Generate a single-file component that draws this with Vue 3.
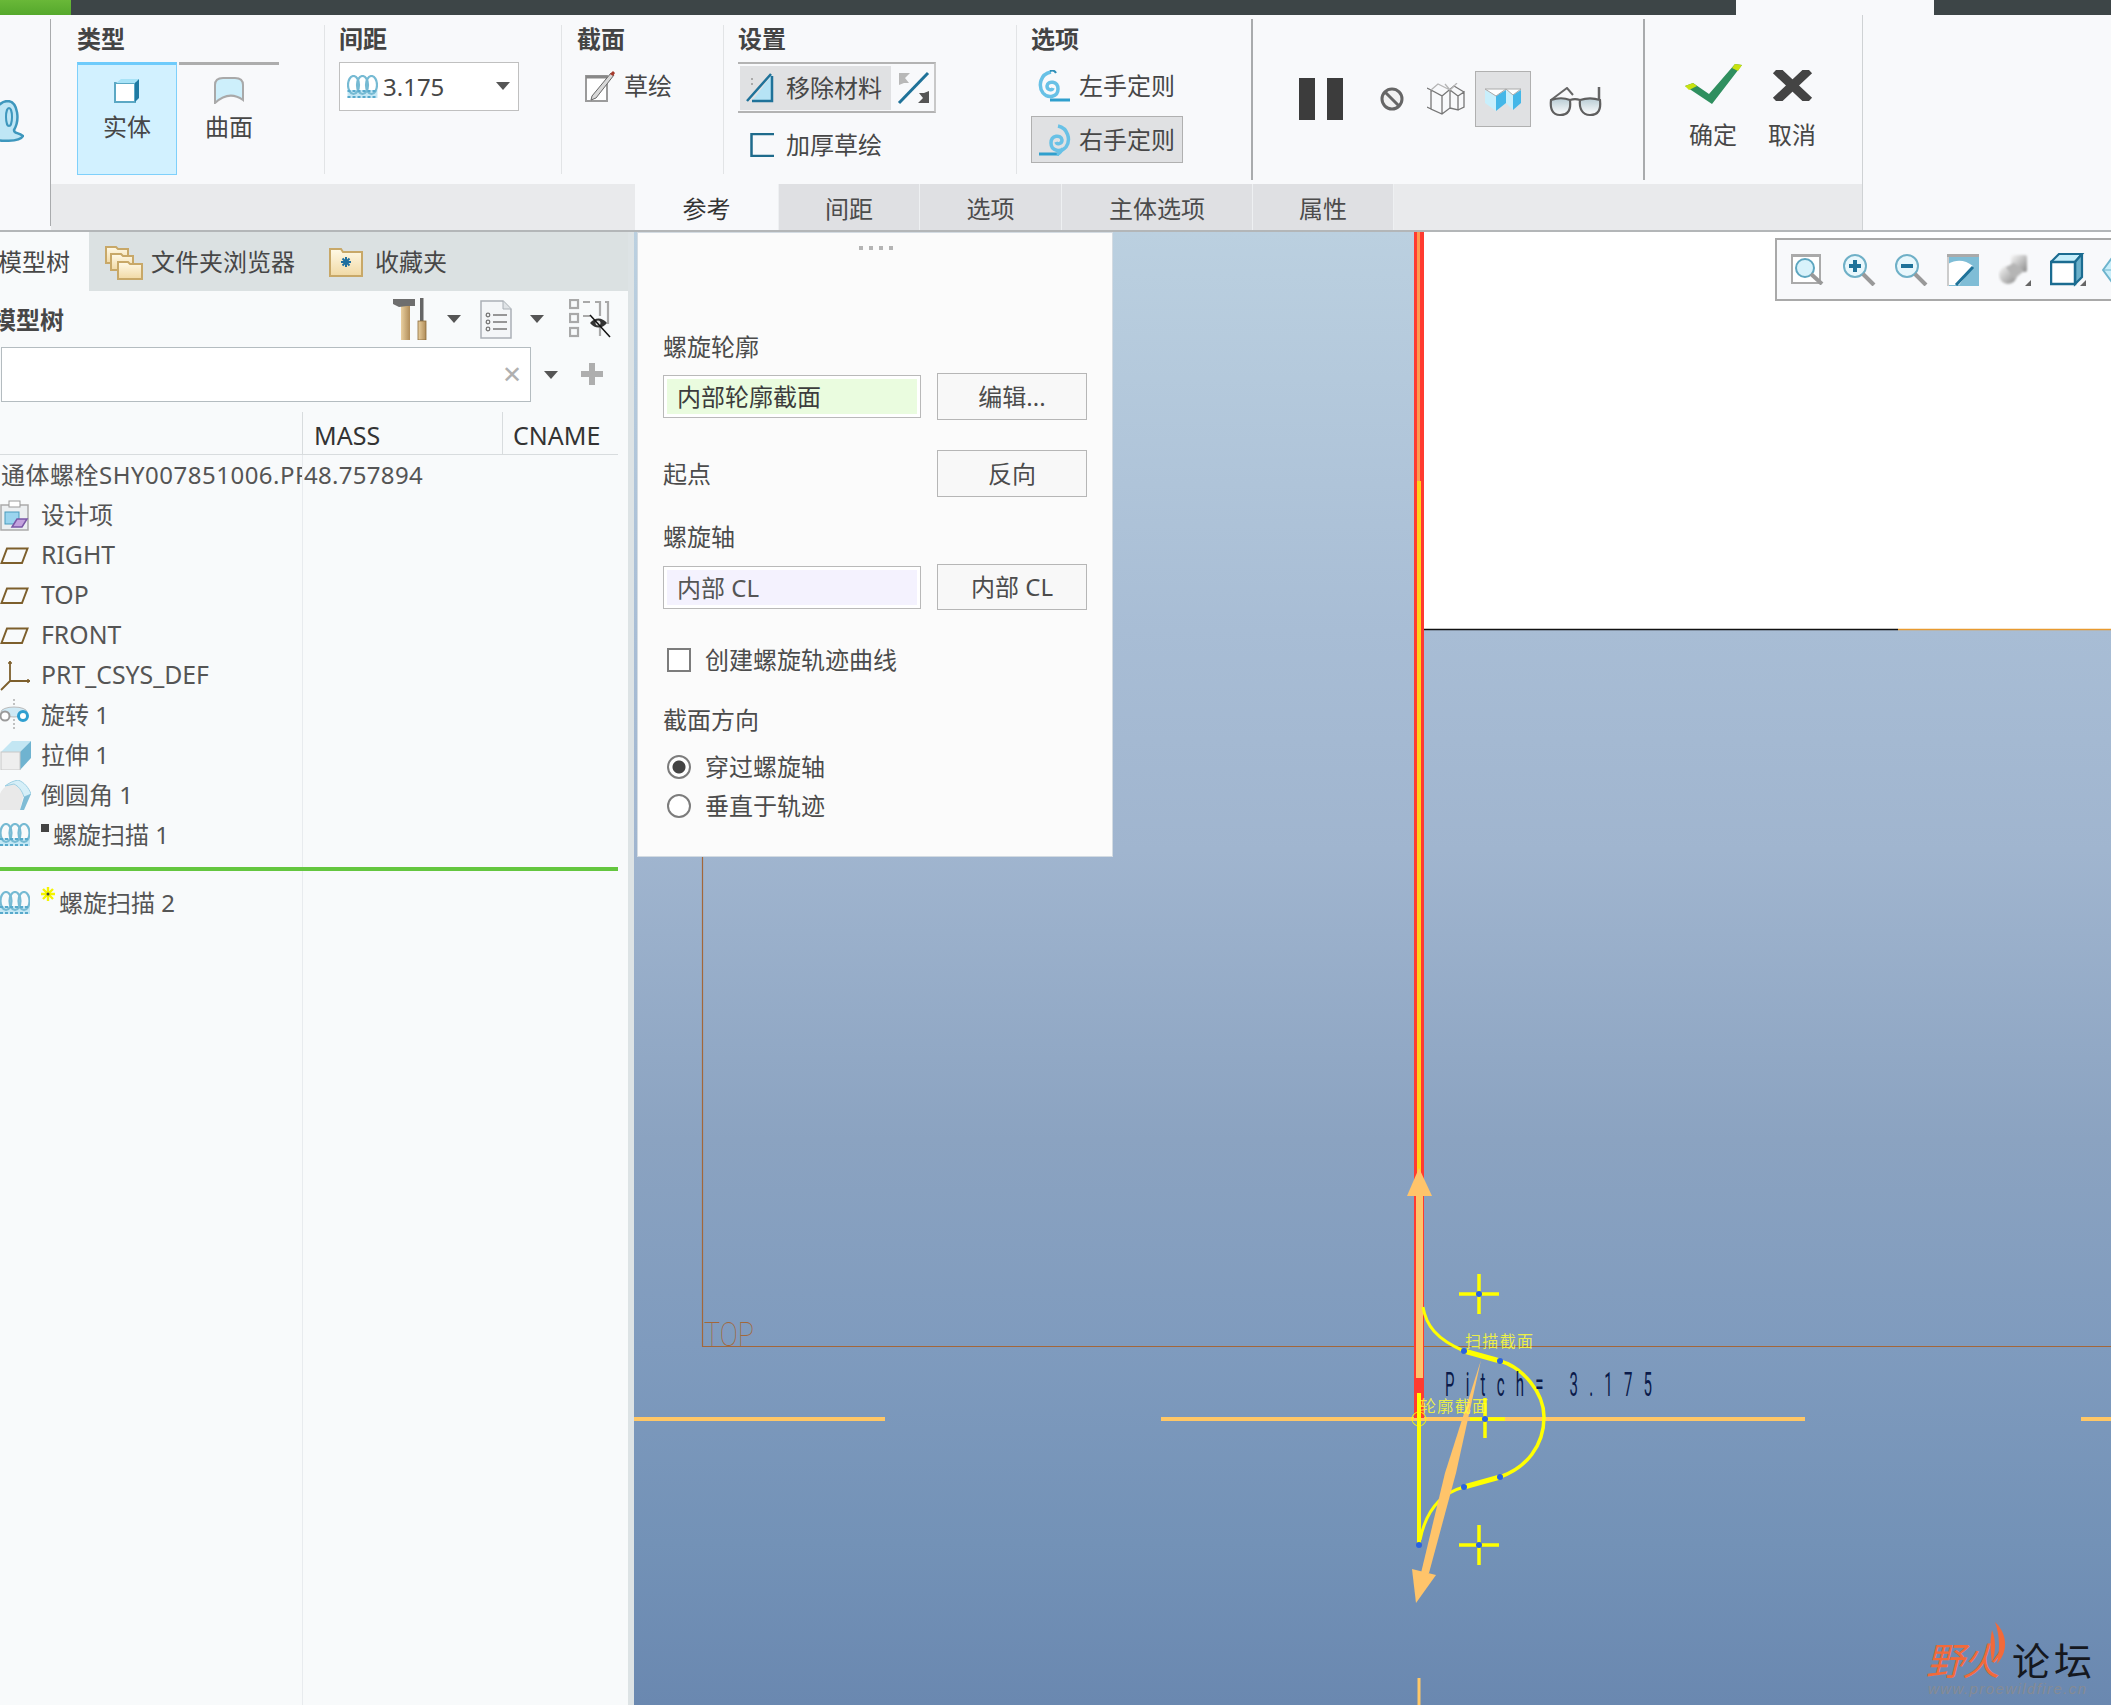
<script setup>
const rows = [
  { icon: 'item', text: '设计项' },
  { icon: 'plane', text: 'RIGHT', latin: true },
  { icon: 'plane', text: 'TOP', latin: true },
  { icon: 'plane', text: 'FRONT', latin: true },
  { icon: 'csys', text: 'PRT_CSYS_DEF', latin: true },
  { icon: 'rev', text: '旋转 1' },
  { icon: 'ext', text: '拉伸 1' },
  { icon: 'round', text: '倒圆角 1' },
]
const tabs = [
  { text: '参考', w: 144, active: true },
  { text: '间距', w: 141 },
  { text: '选项', w: 142 },
  { text: '主体选项', w: 191 },
  { text: '属性', w: 141 },
]
</script>

<template>
  <div class="app">
    <svg class="defs" width="0" height="0">
      <defs>
        <symbol id="helix" viewBox="0 0 30 24">
          <path d="M0 15h30v8H0z" fill="#c4e7f4" />
          <ellipse cx="6" cy="10" rx="5.500" ry="9" fill="none" stroke="#76bad3" stroke-width="2.200" />
          <ellipse cx="15" cy="10" rx="5.500" ry="9" fill="none" stroke="#76bad3" stroke-width="2.200" />
          <ellipse cx="24" cy="10" rx="5.500" ry="9" fill="none" stroke="#76bad3" stroke-width="2.200" />
          <path d="M0 16h30M0 22h30" stroke="#57a9cb" stroke-width="2" stroke-dasharray="3 2" />
        </symbol>
        <linearGradient id="tan" x1="0" y1="0" x2="1" y2="0">
          <stop offset="0" stop-color="#e9cf9f" />
          <stop offset="1" stop-color="#b08c58" />
        </linearGradient>
        <linearGradient id="folder" x1="0" y1="0" x2="0" y2="1">
          <stop offset="0" stop-color="#fff9e6" />
          <stop offset="1" stop-color="#f1d9a5" />
        </linearGradient>
        <linearGradient id="lens" x1="0" y1="0" x2="0" y2="1">
          <stop offset="0" stop-color="#b8ccd4" />
          <stop offset="1" stop-color="#fff" />
        </linearGradient>
        <linearGradient id="sphere" x1="0" y1="0" x2="1" y2="1">
          <stop offset="0" stop-color="#f8f8f8" />
          <stop offset="1" stop-color="#8a8a8a" />
        </linearGradient>
      </defs>
    </svg>

    <header class="topbar">
      <div class="topbar-green"></div>
      <div class="topbar-tab"></div>
    </header>

    <section class="ribbon">
      <div class="stub">
        <svg width="24" height="42" viewBox="0 0 24 42">
          <path d="M-8 38C-2 42 20 42 23 36 18 32 14 34 14 30 20 20 18 2 8 1-2 1-6 12-8 14" fill="#bfe6f5" stroke="#3e97bd" stroke-width="2.500" />
          <ellipse cx="9" cy="17" rx="3" ry="9" fill="none" stroke="#3e97bd" stroke-width="2" />
        </svg>
      </div>

      <div class="ribbon-body">
        <div class="groups">
          <div class="group g-type">
            <div class="g-title">类型</div>
            <div class="type-row">
              <div class="type-btn type-on">
                <svg width="26" height="25" viewBox="0 0 26 25">
                  <rect x="1" y="5" width="20" height="19" fill="#fff" stroke="#5ba8c4" stroke-width="2" />
                  <path d="M2 5 7 1H25L21 5Z" fill="#a8e3f7" />
                  <path d="M21 5 25 1V20L21 24Z" fill="#1f7aa3" />
                </svg>
                <span>实体</span>
              </div>
              <div class="type-btn">
                <svg width="32" height="27" viewBox="0 0 32 27">
                  <path d="M2 26V8Q2 1 10 1H22Q30 1 30 8V23Q16 13 2 26Z" fill="#cdeffb" stroke="#a9a9a9" stroke-width="2" />
                </svg>
                <span>曲面</span>
              </div>
            </div>
          </div>

          <div class="group g-pitch">
            <div class="g-title">间距</div>
            <div class="dropdown">
              <svg width="31" height="24"><use href="#helix" /></svg>
              <span class="dd-val">3.175</span>
              <i class="caret dd-caret"></i>
            </div>
          </div>

          <div class="group g-sec">
            <div class="g-title">截面</div>
            <div class="line-item">
              <svg width="31" height="32" viewBox="0 0 31 32">
                <rect x="1" y="6" width="21" height="25" fill="#fff" stroke="#9b9b9b" stroke-width="2" />
                <path d="M1 7h21" stroke="#888" stroke-width="3" />
                <path d="M7 26 26 3l3 2L11 28l-5 2z" fill="#d8d8d8" stroke="#666" />
                <path d="M25 4l3-3 2 2-2 3z" fill="#a63a2c" />
              </svg>
              <span>草绘</span>
            </div>
          </div>

          <div class="group g-set">
            <div class="g-title">设置</div>
            <div class="seg">
              <div class="seg-main">
                <svg width="30" height="30" viewBox="0 0 30 30">
                  <path d="M6 28 26 2V28Z" fill="#b6e3f5" />
                  <path d="M5 6h4M5 11h2" stroke="#aaa" stroke-width="2" stroke-dasharray="2 2" />
                  <path d="M1 28 25 1M26 3V28H6" fill="none" stroke="#1f7299" stroke-width="2.500" />
                </svg>
                <span>移除材料</span>
              </div>
              <div class="seg-flip">
                <svg width="34" height="34" viewBox="0 0 34 34">
                  <path d="M2 32 31 2" stroke="#1f7299" stroke-width="3" />
                  <path d="M2 2h11L8 7l4 5H7L2 14Z" fill="#b8b8b8" />
                  <path d="M32 32H21l5-5-4-5h5l5-2Z" fill="#555" />
                </svg>
              </div>
            </div>
            <div class="thicken">
              <svg width="24" height="24" viewBox="0 0 24 24">
                <path d="M24 1H1.500V23H24" fill="none" stroke="#1f6b8c" stroke-width="2.500" />
              </svg>
              <span>加厚草绘</span>
            </div>
          </div>

          <div class="group g-opt">
            <div class="g-title">选项</div>
            <div class="opt-item">
              <svg width="33" height="32" viewBox="0 0 33 32">
                <path d="M13 2C2 4 0 16 5 23c5 6 15 4 15-4 0-8-10-9-11-3 0 4 5 5 6 2" fill="none" stroke="#68c1e6" stroke-width="3.500" />
                <path d="M12 1c3-1 5 0 6 2" stroke="#2f8fb8" stroke-width="2" fill="none" />
                <path d="M12 30h20" stroke="#2f9fcd" stroke-width="3" />
              </svg>
              <span>左手定则</span>
            </div>
            <div class="opt-item opt-on">
              <svg width="33" height="32" viewBox="0 0 33 32">
                <path d="M20 2c10 2 13 14 8 21-5 6-15 4-15-4 0-8 10-9 11-3 0 4-5 5-6 2" fill="none" stroke="#68c1e6" stroke-width="3.500" />
                <path d="M21 30H1" stroke="#2f9fcd" stroke-width="3" />
                <path d="M25 24c-2 5-4 6-6 7" stroke="#68c1e6" stroke-width="3" fill="none" />
              </svg>
              <span>右手定则</span>
            </div>
          </div>

          <div class="group g-act">
            <svg class="ic-pause" width="44" height="42" viewBox="0 0 44 42">
              <rect width="16" height="42" fill="#3c3c3c" />
              <rect x="28" width="16" height="42" fill="#3c3c3c" />
            </svg>
            <svg class="ic-no" width="24" height="24" viewBox="0 0 24 24">
              <circle cx="12" cy="12" r="10" fill="#f1f1f1" stroke="#666" stroke-width="3" />
              <path d="M5 5 19 19" stroke="#666" stroke-width="3" />
            </svg>
            <svg class="ic-wire" width="38" height="32" viewBox="0 0 38 32" fill="none" stroke="#777" stroke-width="1.300">
              <path d="M4 7 15 13V31M15 13 27 3 37 9M4 7V26L15 31 23 25V7M23 7 31 13V27L23 25M31 13 37 9V24L31 27M0 5 4 7M0 24 4 26" />
              <path d="M4 7 11 1 23 7M18 1 23 7 30 0" stroke="#b5b5b5" />
            </svg>
            <div class="ic-btn">
              <svg width="38" height="26" viewBox="0 0 38 26">
                <path d="M1 4 12 10V25L1 17Z" fill="#c8effc" />
                <path d="M22 4 12 10V25L22 17Z" fill="#44b7e8" />
                <path d="M1 3H22L12 10Z" fill="#fff" stroke="#aaa" />
                <path d="M22 4 29 9V24L22 17Z" fill="#c8effc" />
                <path d="M37 4 29 9V24L37 17Z" fill="#44b7e8" />
                <path d="M22 3H37L29 9Z" fill="#fff" stroke="#aaa" />
              </svg>
            </div>
            <svg class="ic-glass" width="53" height="30" viewBox="0 0 53 30">
              <path d="M2 13 18 1l6 7" fill="none" stroke="#666" stroke-width="2" />
              <path d="M50 0V14" stroke="#666" stroke-width="2.500" />
              <path d="M2 13C8 11 16 11 21 13 22 22 20 28 11 28 3 28 1 21 2 13ZM31 13C37 11 45 11 51 13 52 22 50 28 41 28 33 28 30 21 31 13ZM21 13C24 12 28 12 31 13" fill="url(#lens)" stroke="#5f5f5f" stroke-width="2.200" />
            </svg>
          </div>

          <div class="group g-ok">
            <div class="ok-col">
              <div class="ok-ic">
                <svg width="57" height="40" viewBox="0 0 57 40">
                  <path d="M0 22 8 19 24 30 50 0 57 1 27 40Z" fill="#2f8f5f" />
                  <path d="M50 0 57 1 53 7 47 4Z" fill="#c9e20f" />
                  <path d="M0 22 8 19 12 22 4 26Z" fill="#c9e20f" />
                </svg>
              </div>
              <span>确定</span>
            </div>
            <div class="ok-col">
              <div class="ok-ic">
                <svg width="41" height="31" viewBox="0 0 41 31">
                  <path d="M4 0 37 31M37 0 4 31" stroke="#444" stroke-width="9" />
                </svg>
              </div>
              <span>取消</span>
            </div>
          </div>
        </div>

        <nav class="tabstrip">
          <div class="tab-gap"></div>
          <div
            v-for="t in tabs"
            :key="t.text"
            class="rtab"
            :class="{ 'rtab-on': t.active }"
            :style="{ width: t.w + 'px' }"
          >{{ t.text }}</div>
        </nav>
      </div>
    </section>

    <main class="work">
      <aside class="side">
        <div class="side-tabs">
          <div class="stab stab-on"><span>模型树</span></div>
          <div class="stab stab-folder">
            <svg width="38" height="36" viewBox="0 0 38 36">
              <path d="M1 7V3h10l2 2h10v14H1Z" fill="url(#folder)" stroke="#c8a868" stroke-width="2" />
              <path d="M6 14v-4h10l2 2h10v14H6Z" fill="url(#folder)" stroke="#c8a868" stroke-width="2" />
              <path d="M13 22v-4h10l2 2h12v15H13Z" fill="url(#folder)" stroke="#c8a868" stroke-width="2" />
            </svg>
            <span>文件夹浏览器</span>
          </div>
          <div class="stab stab-fav">
            <svg width="34" height="30" viewBox="0 0 34 30">
              <path d="M1 5V2h11l2 3h19v24H1Z" fill="url(#folder)" stroke="#c8a868" stroke-width="2" />
              <path d="M17 10v10M12 15h10M13.500 11.500l7 7M20.500 11.500l-7 7" stroke="#1f6f9f" stroke-width="2" />
            </svg>
            <span>收藏夹</span>
          </div>
        </div>

        <div class="tree-bar">
          <b>模型树</b>
          <svg class="ic-tools" width="35" height="42" viewBox="0 0 35 42">
            <rect x="8" y="6" width="9" height="36" fill="url(#tan)" />
            <path d="M0 1H22V8H14L6 9 0 6Z" fill="#6e6e6e" />
            <rect x="27" y="0" width="3.500" height="23" fill="#666" />
            <rect x="25" y="23" width="8" height="19" fill="url(#tan)" stroke="#8a6a3a" stroke-width=".8" />
          </svg>
          <i class="caret c-a"></i>
          <svg class="ic-doc" width="32" height="39" viewBox="0 0 32 39">
            <path d="M1 1H23L31 9V38H1Z" fill="#f4f6f8" stroke="#aab0b6" stroke-width="1.500" />
            <path d="M23 1V9H31" fill="#dfe3e6" stroke="#aab0b6" />
            <g fill="none" stroke="#777" stroke-width="1.300">
              <circle cx="8" cy="15" r="1.800" /><circle cx="8" cy="22" r="1.800" /><circle cx="8" cy="29" r="1.800" />
              <path d="M13 15H27M13 22H27M13 29H27" />
            </g>
          </svg>
          <i class="caret c-b"></i>
          <svg class="ic-tree" width="42" height="40" viewBox="0 0 42 40">
            <g fill="none" stroke="#a9a9a9" stroke-width="2.200">
              <rect x="1" y="1" width="8" height="8" /><rect x="1" y="15" width="8" height="8" /><rect x="1" y="29" width="8" height="8" />
              <path d="M14 3h7M14 17h7M26 3h5v14M36 3h3v22M31 22v15" />
            </g>
            <path d="M21 24c5-6 12-6 17 0-5 6-12 6-17 0Z" fill="#333" />
            <circle cx="29" cy="24" r="2.500" fill="#ddd" />
            <path d="M21 16 41 38" stroke="#111" stroke-width="1.500" />
          </svg>
        </div>

        <div class="search-row">
          <div class="search"><span class="s-x">✕</span></div>
          <i class="caret c-c"></i>
          <span class="s-plus"></span>
        </div>

        <div class="tree-head">
          <div class="th th-a"></div>
          <div class="th th-b">MASS</div>
          <div class="th th-c">CNAME</div>
        </div>

        <div class="tree-body">
          <div class="tr tr-root">
            <span class="root-name">通体螺栓SHY007851006.PRT</span>
            <span class="root-mass">48.757894</span>
          </div>
          <div v-for="r in rows" :key="r.text" class="tr">
            <span class="tr-ic">
              <svg v-if="r.icon === 'item'" width="29" height="31" viewBox="0 0 29 31">
                <rect x="1" y="5" width="27" height="25" fill="#eceff1" stroke="#aaa" stroke-width="1.500" />
                <rect x="9" y="1" width="11" height="6" fill="#fff" stroke="#999" />
                <rect x="5" y="12" width="14" height="12" fill="#9ad4ee" stroke="#4a9bbd" />
                <path d="M12 27 17 19H27L22 27Z" fill="#c3a2dd" stroke="#7a57a6" stroke-width="1.500" />
              </svg>
              <svg v-else-if="r.icon === 'plane'" width="29" height="17" viewBox="0 0 29 17">
                <path d="M1.500 16 7 1.500H27.500L22 16Z" fill="none" stroke="#7d5f2c" stroke-width="2" />
              </svg>
              <svg v-else-if="r.icon === 'csys'" width="31" height="31" viewBox="0 0 31 31">
                <path d="M10 1V21H30M10 21 1 30" fill="none" stroke="#7d5f2c" stroke-width="1.800" />
                <path d="M8 3h4M28 19v4" stroke="#7d5f2c" stroke-width="1.500" />
              </svg>
              <svg v-else-if="r.icon === 'rev'" width="29" height="32" viewBox="0 0 29 32">
                <path d="M14 0V32" stroke="#888" stroke-dasharray="2 2" />
                <ellipse cx="14" cy="13" rx="13" ry="5" fill="#cfe9f5" stroke="#bbb" />
                <circle cx="5" cy="17" r="4.500" fill="#fff" stroke="#9a9a9a" stroke-width="2" />
                <circle cx="23" cy="17" r="4.500" fill="#fff" stroke="#2f9fd0" stroke-width="3" />
              </svg>
              <svg v-else-if="r.icon === 'ext'" width="31" height="30" viewBox="0 0 31 30">
                <path d="M1 12 12 1H31L20 12Z" fill="#c3e6f3" />
                <path d="M20 12 31 1V18L20 30Z" fill="#6fb3d0" />
                <rect x="1" y="12" width="19" height="18" fill="#eeeeee" stroke="#c8c8c8" />
              </svg>
              <svg v-else-if="r.icon === 'round'" width="31" height="30" viewBox="0 0 31 30">
                <path d="M0 30V14C2 8 8 4 14 3L24 13 20 30Z" fill="#e9e9e9" />
                <path d="M5 6C9 3 13 1 18 0 24 2 29 8 31 14L24 17C22 10 18 6 14 4Z" fill="#d6eff8" stroke="#9ccfe3" />
                <path d="M24 17 31 14 24 30H20Z" fill="#7fbcd6" />
              </svg>
            </span>
            <span class="tr-text" :class="{ 'tr-latin': r.latin }">{{ r.text }}</span>
          </div>
          <div class="tr">
            <span class="tr-ic"><svg width="30" height="24"><use href="#helix" /></svg></span>
            <i class="mark"></i>
            <span class="tr-text t-after-mark">螺旋扫描 1</span>
          </div>
          <div class="insert"></div>
          <div class="tr tr-last">
            <span class="tr-ic"><svg width="30" height="24"><use href="#helix" /></svg></span>
            <svg class="mark-new" width="14" height="14" viewBox="0 0 14 14">
              <path d="M7 0V14M0 7H14M2 2 12 12M12 2 2 12" stroke="#f4f400" stroke-width="2.400" />
              <circle cx="7" cy="7" r="1.500" fill="#444" />
            </svg>
            <span class="tr-text">螺旋扫描 2</span>
          </div>
        </div>
      </aside>

      <div class="viewport">
        <svg class="canvas" width="1477" height="1473" viewBox="634 232 1477 1473">
          <rect x="1424" y="232" width="687" height="397" fill="#fff" />
          <path d="M1424 629.500H1898" stroke="#111" stroke-width="1.500" />
          <path d="M1898 629.500H2111" stroke="#e89a30" stroke-width="1.500" />

          <path d="M702.500 856V1346.500H2111" fill="none" stroke="#a3673a" stroke-width="1.200" />
          <text x="704" y="1346" class="t-top" textLength="50" lengthAdjust="spacingAndGlyphs">TOP</text>

          <path d="M634 1419H885M1161 1419H1805M2081 1419H2111" stroke="#ffc766" stroke-width="4" />
          <path d="M1419 1678V1705" stroke="#ffc766" stroke-width="3" />

          <rect x="1414" y="232" width="10" height="1186" fill="#ff3b30" />
          <rect x="1417" y="232" width="3" height="249" fill="#ff9a50" />
          <rect x="1417" y="481" width="4" height="700" fill="#ffd21a" />
          <rect x="1416" y="1190" width="7" height="188" fill="#ffc46a" />
          <path d="M1419 1168 1432 1196H1407Z" fill="#ffc46a" />

          <path d="M1419 1393V1545" stroke="#ffff00" stroke-width="4" />
          <path d="M1423 1307C1426 1325 1436 1339 1464 1351" fill="none" stroke="#ffff00" stroke-width="3" />
          <path d="M1464 1351 1500 1361" fill="none" stroke="#ffff00" stroke-width="5" />
          <path d="M1500 1361C1522 1367 1544 1392 1544 1417 1544 1446 1526 1468 1500 1477" fill="none" stroke="#ffff00" stroke-width="3.500" />
          <path d="M1500 1477 1464 1487" fill="none" stroke="#ffff00" stroke-width="5" />
          <path d="M1464 1487C1442 1493 1426 1510 1420 1540" fill="none" stroke="#ffff00" stroke-width="3" />

          <path d="M1459 1294H1499M1479 1274V1314M1459 1545H1499M1479 1525V1565M1470 1419H1505M1485 1398V1438" stroke="#ffff00" stroke-width="3.500" />

          <path d="M1481 1360 1445 1473 1421 1573H1429L1456 1473Z" fill="#ffc46a" />
          <path d="M1416 1603 1412 1569 1436 1575Z" fill="#ffc46a" />

          <g fill="#2a62e0">
            <circle cx="1479" cy="1294" r="3" /><circle cx="1479" cy="1545" r="3" /><circle cx="1485" cy="1419" r="3" />
            <circle cx="1464" cy="1351" r="3" /><circle cx="1500" cy="1361" r="3" />
            <circle cx="1500" cy="1477" r="3" /><circle cx="1464" cy="1487" r="3" /><circle cx="1419" cy="1545" r="3" />
          </g>

          <ellipse cx="1419" cy="1419" rx="7" ry="7" fill="none" stroke="#ffff00" />
          <text x="1465" y="1347" class="t-y" textLength="68">扫描截面</text>
          <text x="1420" y="1412" class="t-y" textLength="68">轮廓截面</text>
          <g transform="translate(1445 1396) scale(.5 1.100)">
            <text class="t-pitch" textLength="414">Pitch= 3.175</text>
          </g>

          <path d="M1995 1622C2006 1632 2010 1650 1997 1664 2000 1650 2000 1636 1995 1622ZM1992 1630C1996 1640 1996 1652 1992 1662 1990 1650 1990 1640 1992 1630Z" fill="#f26a3a" />
          <text x="1926" y="1675" class="t-wm1" textLength="74">野火</text>
          <text x="2012" y="1675" class="t-wm2" textLength="80">论坛</text>
          <text x="1928" y="1694" class="t-wm3" textLength="158">www.proewildfire.cn</text>
        </svg>

        <div class="popup">
          <div class="pop-dots"><i></i><i></i><i></i><i></i></div>
          <div class="pop-label first">螺旋轮廓</div>
          <div class="pop-grid r1">
            <div class="field"><span class="f-green">内部轮廓截面</span></div>
            <button class="pbtn">编辑...</button>
          </div>
          <div class="pop-grid r2">
            <div class="pop-plain">起点</div>
            <button class="pbtn">反向</button>
          </div>
          <div class="pop-label l3">螺旋轴</div>
          <div class="pop-grid r3">
            <div class="field"><span class="f-purple">内部 CL</span></div>
            <button class="pbtn">内部 CL</button>
          </div>
          <div class="chk"><i class="box"></i><span>创建螺旋轨迹曲线</span></div>
          <div class="pop-label l4">截面方向</div>
          <div class="radio r-a"><i class="dot dot-on"></i><span>穿过螺旋轴</span></div>
          <div class="radio r-b"><i class="dot"></i><span>垂直于轨迹</span></div>
        </div>

        <div class="floatbar">
          <svg width="33" height="31" viewBox="0 0 33 31">
            <rect x="1" y="1" width="28" height="28" fill="#fff" stroke="#aaa" stroke-width="2" />
            <rect x="0" y="0" width="30" height="3" fill="#aaa" />
            <circle cx="14" cy="14" r="9" fill="#d8f2fb" stroke="#5da6c0" stroke-width="2" />
            <path d="M20 20 31 30" stroke="#999" stroke-width="4" />
          </svg>
          <svg width="33" height="32" viewBox="0 0 33 32">
            <circle cx="12" cy="12" r="11" fill="#e8f7fc" stroke="#6fb0c7" stroke-width="2" />
            <path d="M12 6V18M6 12H18" stroke="#1f7299" stroke-width="4" />
            <path d="M20 20 31 31" stroke="#999" stroke-width="4" />
          </svg>
          <svg width="33" height="32" viewBox="0 0 33 32">
            <circle cx="12" cy="12" r="11" fill="#e8f7fc" stroke="#6fb0c7" stroke-width="2" />
            <path d="M6 12H18" stroke="#1f7299" stroke-width="4" />
            <path d="M20 20 31 31" stroke="#999" stroke-width="4" />
          </svg>
          <svg width="32" height="32" viewBox="0 0 32 32">
            <rect x="0" y="0" width="32" height="32" fill="#7fbdd6" />
            <rect x="0" y="0" width="32" height="3" fill="#aaa" />
            <path d="M1 10C10 5 18 6 26 12L12 31H1Z" fill="#fff" />
            <path d="M9 31 26 13" stroke="#1f7299" stroke-width="3" />
            <rect x="0" y="3" width="2" height="29" fill="#ccc" />
          </svg>
          <svg width="33" height="34" viewBox="0 0 33 34">
            <g class="soft">
              <circle cx="10" cy="22" r="9" fill="url(#sphere)" />
              <rect x="13" y="2" width="16" height="17" rx="2" fill="url(#sphere)" />
              <path d="M8 14 16 10 26 18 16 26Z" fill="#b5b5b5" />
            </g>
            <path d="M27 33h6v-6Z" fill="#666" />
          </svg>
          <svg width="36" height="34" viewBox="0 0 36 34">
            <path d="M1 9 9 1H32L25 9Z" fill="#c5eefb" stroke="#1b6c91" stroke-width="2.200" />
            <path d="M25 9 32 1V24L25 31Z" fill="#6bb0ca" stroke="#1b6c91" stroke-width="2.200" />
            <rect x="1" y="9" width="24" height="22" fill="#fff" stroke="#1b6c91" stroke-width="2.500" />
            <path d="M30 33h6v-6Z" fill="#666" />
          </svg>
          <svg class="fb-last" width="12" height="32" viewBox="0 0 12 32">
            <path d="M12 1 1 16 12 31" fill="#c8eefa" stroke="#6db4cd" stroke-width="2" />
            <path d="M1 16H12" stroke="#6db4cd" />
          </svg>
        </div>
      </div>
    </main>
  </div>
</template>

<style>
html, body { margin: 0; padding: 0; background: #fff; }
</style>

<style scoped>
.app {
  width: 2111px;
  height: 1705px;
  overflow: hidden;
  display: flex;
  flex-direction: column;
  font-family: "Noto Sans", "Noto Sans CJK SC", sans-serif;
  font-size: 24px;
  line-height: 30px;
  color: #474747;
  background: #f8f9fb;
}
.defs { position: absolute; }
svg { display: block; flex: none; }
i { display: block; flex: none; }

/* top bar */
.topbar {
  height: 15px;
  flex: none;
  display: flex;
  background: #3d4547;
}
.topbar-green { width: 71px; background: linear-gradient(#69b838, #55a82c); }
.topbar-tab { width: 198px; margin-left: 1665px; background: #f8f9fb; }

/* ribbon */
.ribbon {
  height: 215px;
  flex: none;
  display: flex;
  background: #f8f9fb;
  border-bottom: 2px solid #b3b6b8;
}
.stub {
  width: 50px;
  height: 207px;
  margin-top: 4px;
  box-sizing: content-box;
  border-right: 1.500px solid #a9abad;
  padding-top: 0;
  display: flex;
  align-items: flex-start;
}
.stub svg { margin-top: 81px; }
.ribbon-body {
  width: 1811px;
  display: flex;
  flex-direction: column;
  border-right: 1px solid #cfd2d4;
}
.groups { height: 169px; display: flex; flex: none; }
.tabstrip { height: 46px; display: flex; background: #e9eaec; }
.tab-gap { width: 584px; }
.rtab {
  background: #dfe0e3;
  border-right: 1px solid #eef0f2;
  box-sizing: border-box;
  display: flex;
  align-items: center;
  justify-content: center;
  padding-top: 3px;
  color: #4c4c4c;
}
.rtab-on { background: #f8f9fb; color: #333; }

.group {
  margin-top: 10px;
  height: 149px;
  box-sizing: border-box;
  border-right: 1px solid #e2e4e6;
}
.g-title { font-weight: 700; height: 28px; line-height: 28px; margin-bottom: 9px; color: #444; }
.g-type { width: 274px; padding-left: 26px; }
.g-pitch { width: 237px; padding-left: 14px; }
.g-sec { width: 162px; padding-left: 15px; }
.g-set { width: 293px; padding-left: 14px; }
.g-opt { width: 236px; padding-left: 14px; border-right: 2px solid #a9abad; margin-top: 4px; height: 161px; padding-top: 6px; }
.g-act {
  width: 392px;
  margin-top: 4px;
  height: 161px;
  border-right: 2px solid #a9abad;
  display: flex;
  align-items: center;
  padding-left: 46px;
  padding-bottom: 2px;
}
.g-ok { margin-top: 4px; padding-left: 33px; display: flex; gap: 9px; border-right: 0; height: 161px; }

.type-row { display: flex; gap: 2px; }
.type-btn {
  width: 100px;
  height: 113px;
  box-sizing: border-box;
  border-top: 3px solid #adadad;
  display: flex;
  flex-direction: column;
  align-items: center;
  padding-top: 12px;
}
.type-btn svg { height: 27px; }
.type-btn span { margin-top: 8px; }
.type-on {
  background: #d2f1ff;
  border: 1px solid #7fd0fb;
  border-top: 3px solid #6ecbfb;
}
.dropdown {
  width: 180px;
  height: 49px;
  box-sizing: border-box;
  border: 1px solid #c0c0c0;
  background: #fff;
  display: flex;
  align-items: center;
  padding-left: 7px;
}
.dd-val { margin-left: 5px; }
.caret {
  width: 0;
  height: 0;
  border-left: 7px solid transparent;
  border-right: 7px solid transparent;
  border-top: 8px solid #555;
}
.dd-caret { margin-left: 52px; margin-top: -1px; }

.line-item { display: flex; align-items: center; padding-left: 8px; margin-top: 17px; }
.line-item span { margin-left: 8px; }

.seg {
  width: 198px;
  height: 51px;
  box-sizing: border-box;
  border-top: 2px solid #b3b3b3;
  border-bottom: 2px solid #b3b3b3;
  border-right: 2px solid #c8c8c8;
  display: flex;
  align-items: stretch;
}
.seg-main {
  width: 151px;
  margin-left: 2px;
  margin-top: 2px;
  margin-bottom: 1px;
  background: #e0e1e3;
  display: flex;
  align-items: center;
  padding-left: 6px;
  box-sizing: border-box;
}
.seg-main span { margin-left: 10px; }
.seg-flip { display: flex; align-items: center; padding-left: 6px; }
.thicken { display: flex; align-items: center; margin-top: 17px; padding-left: 12px; }
.thicken span { margin-left: 12px; }

.opt-item { display: flex; align-items: center; padding-left: 7px; height: 47px; margin-top: 1px; }
.opt-item span { margin-left: 8px; }
.opt-on {
  width: 152px;
  box-sizing: border-box;
  background: #e0e1e3;
  border: 1px solid #b0b0b0;
  margin-top: 7px;
  padding-left: 6px;
}
.opt-on span { margin-left: 8px; }

.ic-no { margin-left: 37px; }
.ic-wire { margin-left: 23px; }
.ic-btn {
  width: 56px;
  height: 56px;
  box-sizing: border-box;
  margin-left: 10px;
  background: #e0e1e3;
  border: 1px solid #b0b0b0;
  display: flex;
  align-items: center;
  justify-content: center;
}
.ic-glass { margin-left: 18px; margin-top: 7px; }

.ok-col { width: 70px; display: flex; flex-direction: column; align-items: center; }
.ok-ic { height: 58px; margin-top: 45px; display: flex; justify-content: center; align-items: flex-start; margin-bottom: 19px; }
.ok-col:last-child .ok-ic svg { margin-top: 6px; }
.ok-col span { margin-top: -21px; }

/* work area */
.work { flex: 1; display: flex; min-height: 0; }
.side {
  width: 634px;
  flex: none;
  box-sizing: border-box;
  border-right: 6px solid #dde3e5;
  background: #f8fafb;
  display: flex;
  flex-direction: column;
  overflow: hidden;
  position: relative;
}
.side-tabs {
  height: 59px;
  flex: none;
  width: 634px;
  display: flex;
  background: #dbe1e2;
}
.stab { display: flex; align-items: center; }
.stab-on { width: 89px; background: #f8fafb; }
.stab-on span { margin-left: -2px; }
.stab-folder { margin-left: 16px; width: 224px; }
.stab-folder span { margin-left: 8px; }
.stab-fav span { margin-left: 12px; }

.tree-bar { height: 56px; flex: none; display: flex; align-items: center; }
.tree-bar b { margin-left: -8px; width: 401px; font-weight: 700; padding-top: 2px; }
.c-a { margin-left: 19px; }
.ic-doc { margin-left: 19px; }
.c-b { margin-left: 18px; }
.ic-tree { margin-left: 25px; }

.search-row { height: 55px; flex: none; display: flex; align-items: center; }
.search {
  width: 530px;
  height: 55px;
  margin-left: 1px;
  box-sizing: border-box;
  background: #fff;
  border: 1px solid #b4bcc0;
  display: flex;
  align-items: center;
  justify-content: flex-end;
}
.s-x { color: #b0b0b0; font-size: 24px; margin-right: 8px; font-family: "DejaVu Sans", sans-serif; }
.c-c { margin-left: 13px; }
.s-plus {
  width: 22px;
  height: 22px;
  margin-left: 23px;
  margin-top: -2px;
  background:
    linear-gradient(#aeaeae, #aeaeae) center / 22px 6px no-repeat,
    linear-gradient(#aeaeae, #aeaeae) center / 6px 22px no-repeat;
}

.tree-head {
  height: 43px;
  margin-top: 10px;
  flex: none;
  width: 618px;
  display: flex;
  box-sizing: border-box;
  border-bottom: 1px solid #d8dcde;
}
.th { box-sizing: border-box; height: 42px; line-height: 46px; color: #333; padding-left: 11px; font-size: 25px; }
.th-a { width: 302px; }
.th-b { width: 200px; border-left: 1px solid #d8dcde; }
.th-c { width: 116px; border-left: 1px solid #d8dcde; padding-left: 10px; }

.tree-body {
  flex: 1;
  background: linear-gradient(#e8ebee, #e8ebee) 302px 0 / 1px 100% no-repeat;
  color: #555;
}
.tr { height: 40px; display: flex; align-items: center; position: relative; }
.root-name { width: 302px; overflow: hidden; white-space: nowrap; flex: none; padding-left: 1px; box-sizing: border-box; letter-spacing: .5px; }
.root-mass { margin-left: 2px; letter-spacing: .3px; }
.tr-ic { width: 41px; flex: none; display: flex; align-items: center; }
.tr-text { white-space: nowrap; }
.tr-latin { font-size: 24.800px; margin-top: -2px; }
.mark { width: 8px; height: 8px; background: #444; align-self: flex-start; margin-top: 9px; margin-right: 4px; }
.mark-new { align-self: flex-start; margin-top: 4px; margin-right: 4px; }
.insert { height: 4px; width: 618px; margin-top: 12px; background: #64c63f; }
.tr-last { margin-top: 12px; }

/* viewport */
.viewport {
  flex: 1;
  position: relative;
  overflow: hidden;
  background: linear-gradient(#bbd0e0 0%, #a8bdd5 27%, #a0b5cf 42%, #8ba3c1 61.600%, #7f9bbe 75.600%, #7392b7 89%, #6a88b0 100%);
}
.canvas { position: absolute; left: 0; top: 0; }
.soft { filter: blur(1px); }
.t-top { font: 100 34px Roboto, sans-serif; fill: #a3673a; }
.t-y { font: 400 16px "Noto Sans CJK SC", sans-serif; fill: #ffff33; fill-opacity: .85; }
.t-pitch { font: 400 30px Roboto, sans-serif; fill: #0a1a4a; }
.t-wm1 { font: italic 400 38px "Noto Sans CJK SC", sans-serif; fill: #f26a3a; }
.t-wm2 { font: 400 38px "Noto Sans CJK SC", sans-serif; fill: #15181f; }
.t-wm3 { font: italic 400 15px "Liberation Sans", sans-serif; fill: #868b93; }

.popup {
  position: absolute;
  left: 3px;
  top: 0;
  width: 476px;
  height: 625px;
  box-sizing: border-box;
  background: #fbfbfb;
  border: 1px solid #d3dbe2;
  padding: 0 24px 0 25px;
  color: #4c4c4c;
}
.pop-dots { height: 30px; display: flex; justify-content: center; align-items: center; gap: 6px; }
.pop-dots i { width: 4px; height: 4px; background: #b4b4b4; }
.pop-label { height: 30px; }
.first { margin-top: 69px; }
.pop-grid { display: grid; grid-template-columns: 258px 150px; column-gap: 16px; align-items: center; }
.r1 { margin-top: 11px; height: 47px; }
.r2 { margin-top: 30px; height: 47px; }
.l3 { margin-top: 25px; }
.r3 { margin-top: 12px; height: 46px; }
.field {
  height: 43px;
  box-sizing: border-box;
  border: 1px solid #b9b9b9;
  padding: 3px;
  background: #fff;
  display: flex;
}
.field span { flex: 1; padding-left: 10px; line-height: 35px; color: #3c3c3c; }
.f-green { background: #eafcdf; }
.f-purple { background: #f4f2fe; color: #555 !important; }
.pbtn {
  height: 47px;
  font: inherit;
  color: #4c4c4c;
  background: #f8f8f8;
  border: 1px solid #b6b6b6;
  padding: 0;
}
.r3 .pbtn { height: 46px; }
.chk { display: flex; align-items: center; height: 30px; margin-top: 35px; padding-left: 4px; }
.box { width: 24px; height: 24px; box-sizing: border-box; border: 2px solid #7c7c7c; background: #fff; margin-right: 14px; }
.l4 { margin-top: 30px; }
.radio { display: flex; align-items: center; height: 30px; padding-left: 4px; }
.r-a { margin-top: 17px; }
.r-b { margin-top: 9px; }
.dot { width: 24px; height: 24px; box-sizing: border-box; border-radius: 50%; border: 2px solid #7c7c7c; background: #fff; margin-right: 14px; position: relative; }
.dot-on { background: radial-gradient(circle, #444 0 6px, #fff 7px); }

.floatbar {
  position: absolute;
  left: 1141px;
  top: 6px;
  width: 400px;
  height: 63px;
  box-sizing: border-box;
  background: #f8f9fb;
  border: 2px solid #a9a9a9;
  border-right: 0;
  display: flex;
  align-items: center;
  gap: 19px;
  padding-left: 14px;
}
.fb-last { margin-left: -3px; }
</style>
